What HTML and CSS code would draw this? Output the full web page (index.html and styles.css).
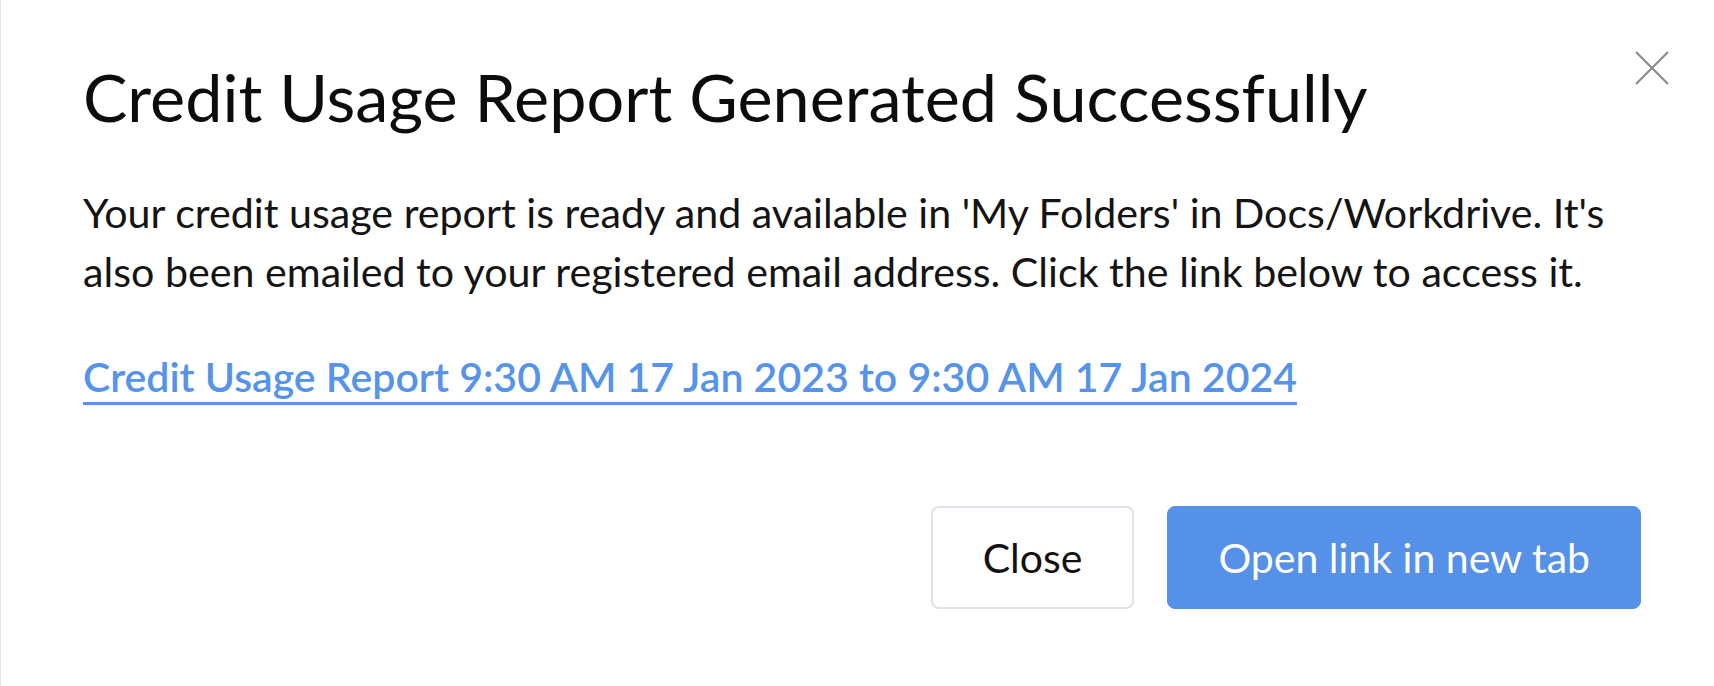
FILE: index.html
```html
<!DOCTYPE html>
<html lang="en">
<head>
  <meta charset="UTF-8">
  <title>Credit Usage Report</title>
  <link rel="stylesheet" href="styles.css">
</head>
<body>

  <div class="dialog">
    <button class="dialog-close" aria-label="Close">
      <svg width="34" height="34" viewBox="0 0 34 34">
        <path d="M1 1 L33 33 M33 1 L1 33" stroke="#8c8c8c" stroke-width="2.2" fill="none" />
      </svg>
    </button>

    <h2 class="dialog-title">Credit Usage Report Generated Successfully</h2>

    <p class="dialog-text">
      Your credit usage report is ready and available in 'My Folders' in Docs/Workdrive. It's
      also been emailed to your registered email address. Click the link below to access it.
    </p>

    <a class="report-link" href="#">Credit Usage Report 9:30 AM 17 Jan 2023 to 9:30 AM 17 Jan 2024</a>

    <div class="dialog-actions">
      <button class="btn btn-light">Close</button>
      <button class="btn btn-primary">Open link in new tab</button>
    </div>
  </div>

</body>
</html>
```

FILE: styles.css
```css
body {
  margin: 0;
  font-family: Lato, "Open Sans", sans-serif;
  background: #fff;
  color: #111;
}

.dialog {
  position: relative;
  height: 686px;
  box-sizing: border-box;
  padding: 57px 73px 0 82px;
  border-left: 1px solid #e2e2e2;
}

.dialog-close {
  position: absolute;
  top: 51px;
  right: 45px;
  padding: 0;
  border: none;
  background: none;
  cursor: pointer;
  line-height: 0;
}

.dialog-title {
  margin: 0;
  font-size: 66.5px;
  font-weight: 400;
  line-height: 1.2;
  color: #0c0c0c;
}

.dialog-text {
  margin: 46px 0 0;
  font-size: 41.2px;
  line-height: 59px;
  color: #141414;
}

.report-link {
  display: block;
  margin-top: 46px;
  font-size: 41px;
  font-weight: 600;
  line-height: 59px;
  color: #5693ea;
  text-underline-offset: 10px;
  text-decoration-thickness: 3px;
}

.dialog-actions {
  display: flex;
  justify-content: flex-end;
  gap: 33px;
  margin-top: 100px;
}

.btn {
  height: 103px;
  padding: 0 50px;
  border-radius: 8px;
  font-family: Lato, "Open Sans", sans-serif;
  font-size: 41px;
  cursor: pointer;
}

.btn-light {
  background: #fff;
  border: 2px solid #dfe2e8;
  color: #111;
}

.btn-primary {
  background: #5591e8;
  border: 1px solid #5591e8;
  color: #fff;
}
```
